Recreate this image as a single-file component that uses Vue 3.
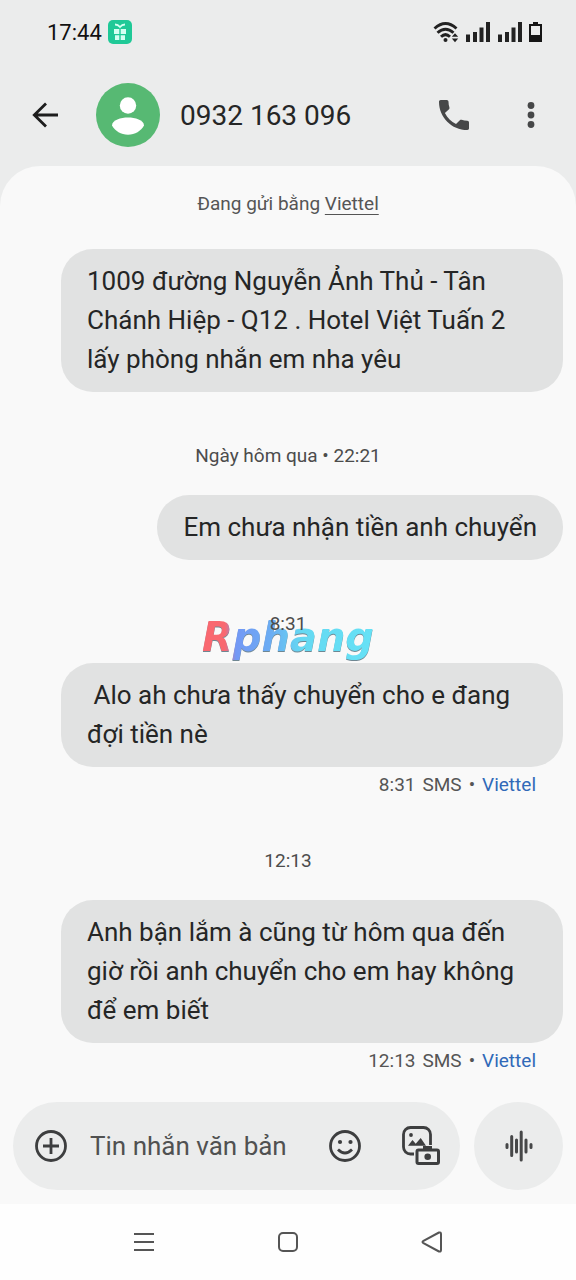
<script setup>
const thread = [
  {
    id: 1,
    text: '1009 đường Nguyễn Ảnh Thủ - Tân Chánh Hiệp - Q12 . Hotel Việt Tuấn 2 lấy phòng nhắn em nha yêu',
  },
  { id: 2, stamp: 'Ngày hôm qua • 22:21', text: 'Em chưa nhận tiền anh chuyển' },
  {
    id: 3,
    stamp: '8:31',
    logo: 'Rphang',
    text: ' Alo ah chưa thấy chuyển cho e đang đợi tiền nè',
    sent: '8:31',
  },
  {
    id: 4,
    stamp: '12:13',
    text: 'Anh bận lắm à cũng từ hôm qua đến giờ rồi anh chuyển cho em hay không để em biết',
    sent: '12:13',
  },
]
</script>

<template>
  <div class="phone">
    <div class="status">
      <div class="status-left">
        <span class="clock">17:44</span>
        <svg class="gift" viewBox="0 0 24 24" aria-hidden="true">
          <rect width="24" height="24" rx="5" fill="#1fc997" />
          <path d="M7 4.5q3 0 5 2.500q2-2.500 5-2.500" fill="none" stroke="#d5fff2" stroke-width="1.800" />
          <path d="M6 9h5.300v5H6zM12.700 9H18v5h-5.300zM7 15.200h4.300V20H7zM12.700 15.200H17V20h-4.300z" fill="#d5fff2" />
        </svg>
      </div>
      <div class="status-right" aria-hidden="true">
        <svg class="wifi" viewBox="0 0 26 22">
          <g fill="none" stroke="#222" stroke-width="2.900">
            <path d="M1.500 7.500Q12.500 -2.500 23.500 7.500" />
            <path d="M4.500 11.800Q12.500 4.500 20.500 11.800" />
            <path d="M8 15.800Q12.500 11.500 17 15.800" />
          </g>
          <circle cx="12.500" cy="19" r="2" fill="#222" />
          <path d="M18.800 15.800l3.200-3.600 3.200 3.600zM18.800 17.600h6.400L22 21.200z" fill="#222" />
        </svg>
        <svg v-for="n in 2" :key="n" class="bars" viewBox="0 0 26 20">
          <path d="M1 12.500h4V20H1zM8 10h4v10H8zM14.500 5.500h4V20h-4zM21 0h4v20h-4z" fill="#222" />
        </svg>
        <svg class="battery" viewBox="0 0 13 20">
          <path d="M4 0h5v2h4v18H0V2h4zM2 4v9h9V4z" fill="#151515" fill-rule="evenodd" />
        </svg>
      </div>
    </div>

    <header class="bar">
      <button class="icon-btn back" type="button" aria-label="Quay lại">
        <svg viewBox="0 0 28 28" fill="none" stroke="#1d1d1d" stroke-width="2.800">
          <path d="M27 14H3M15 2.500L3.300 14 15 25.500" />
        </svg>
      </button>
      <svg class="avatar" viewBox="0 0 64 64" aria-hidden="true">
        <circle cx="32" cy="32" r="32" fill="#57b973" />
        <circle cx="32" cy="22.500" r="8.200" fill="#fff" />
        <path d="M16 42.500C16 37 25 34.500 32 34.500S48 37 48 42.500C45 48 39 51.700 32 51.700S19 48 16 42.500z" fill="#fff" />
      </svg>
      <h1 class="name">0932 163 096</h1>
      <button class="icon-btn call" type="button" aria-label="Gọi">
        <svg viewBox="3 3 18 18" fill="#464748">
          <path d="M6.540 10.790c1.500 2.900 3.770 5.270 6.670 6.670l2.300-2.300c.28-.28.670-.36 1.020-.24 1.120.37 2.320.57 3.470.57.600 0 1 .45 1 1V20c0 .550-.4 1-1 1C10.600 21 3 13.400 3 4c0-.550.450-1 1-1h3.700c.550 0 1 .450 1 1 0 1.250.2 2.450.57 3.570.1.350 0 .740-.25 1.020z" />
        </svg>
      </button>
      <button class="icon-btn more" type="button" aria-label="Tùy chọn khác">
        <svg viewBox="0 0 8 28" fill="#464748">
          <circle cx="4" cy="4.500" r="3.400" /><circle cx="4" cy="14" r="3.400" /><circle cx="4" cy="23.500" r="3.400" />
        </svg>
      </button>
    </header>

    <main class="panel">
      <p class="notice">Đang gửi bằng <a href="#sim">Viettel</a></p>

      <section v-for="m in thread" :key="m.id" class="entry">
        <div v-if="m.stamp" class="stamp">
          <span v-if="m.logo" class="logo">{{ m.logo }}</span>
          <time class="stamp-text">{{ m.stamp }}</time>
        </div>
        <p class="bubble">{{ m.text }}</p>
        <div v-if="m.sent" class="meta">
          <span>{{ m.sent }}</span><span>SMS</span><span>•</span><a href="#sim">Viettel</a>
        </div>
      </section>

      <form class="composer" @submit.prevent>
        <div class="field">
          <button class="icon-btn" type="button" aria-label="Đính kèm">
            <svg class="i34" viewBox="0 0 34 34" fill="none" stroke="#3d3e3f" stroke-width="2.800">
              <circle cx="17" cy="17" r="14.500" /><path d="M17 9v16M9 17h16" />
            </svg>
          </button>
          <input class="input" type="text" placeholder="Tin nhắn văn bản" aria-label="Tin nhắn văn bản" />
          <button class="icon-btn" type="button" aria-label="Biểu tượng cảm xúc">
            <svg class="i34" viewBox="0 0 34 34" fill="none" stroke="#3d3e3f" stroke-width="2.800">
              <circle cx="17" cy="17" r="14.500" />
              <path d="M10 20.500q7 7 14 0" />
              <circle cx="12" cy="13" r="2.100" fill="#3d3e3f" stroke="none" />
              <circle cx="22.500" cy="13" r="2.100" fill="#3d3e3f" stroke="none" />
            </svg>
          </button>
          <button class="icon-btn gallery" type="button" aria-label="Thư viện ảnh">
            <svg viewBox="0 0 38 40">
              <path d="M28.500 19V8.500a7 7 0 0 0-7-7h-13a7 7 0 0 0-7 7v12.500a7 7 0 0 0 7 7H12" fill="none" stroke="#3d3e3f" stroke-width="2.800" />
              <circle cx="9" cy="9" r="1.900" fill="#3d3e3f" />
              <path d="M6 19.800l4.500-5.800 3.200 3.700 5-5.700 5.300 7.800z" fill="#3d3e3f" />
              <path d="M21 21.500h9" stroke="#3d3e3f" stroke-width="3" />
              <rect x="15" y="24" width="21.500" height="13.500" rx="1.500" fill="#ebecec" stroke="#3d3e3f" stroke-width="3" />
              <circle cx="25.700" cy="30.800" r="3.300" fill="#3d3e3f" />
            </svg>
          </button>
        </div>
        <button class="voice" type="button" aria-label="Ghi âm">
          <svg viewBox="0 0 28 32" fill="none" stroke="#464748" stroke-width="3" stroke-linecap="round">
            <path d="M2 14.500v3M6.700 6.500v19M11.500 10v12M16.200 2v28M21 10v12M26 14.500v3" />
          </svg>
        </button>
      </form>
    </main>

    <nav class="nav">
      <button class="icon-btn" type="button" aria-label="Ứng dụng gần đây">
        <svg viewBox="0 0 22 22" fill="none" stroke="#555" stroke-width="2"><path d="M1 3h20M1 11h20M1 19h20" /></svg>
      </button>
      <button class="icon-btn" type="button" aria-label="Màn hình chính">
        <svg viewBox="0 0 22 22" fill="none" stroke="#555" stroke-width="2"><rect x="2" y="2" width="18" height="18" rx="4" /></svg>
      </button>
      <button class="icon-btn" type="button" aria-label="Trở về">
        <svg viewBox="0 0 22 22" fill="none" stroke="#555" stroke-width="2" stroke-linejoin="round"><path d="M2 10.200L18 1.500Q20 1 20 3v16q0 2-2 1.500L2 11.800Q1 11 2 10.200z" /></svg>
      </button>
    </nav>
  </div>
</template>

<style>
body {
  margin: 0;
  background: #ebecec;
}
</style>

<style scoped>
.phone {
  display: flex;
  flex-direction: column;
  min-height: 100vh;
  font-family: Roboto, "Noto Sans", sans-serif;
  color: #252626;
  background: #ebecec;
}
.status {
  display: flex;
  justify-content: space-between;
  align-items: center;
  height: 64px;
  padding: 0 34px 0 47px;
}
.status-left,
.status-right {
  display: flex;
  align-items: center;
  gap: 6px;
}
.clock {
  font-size: 22px;
  font-weight: 400;
  color: #111;
}
.gift {
  width: 24px;
  height: 24px;
}
.wifi {
  width: 26px;
  height: 22px;
}
.bars {
  width: 26px;
  height: 20px;
}
.battery {
  width: 13px;
  height: 20px;
}
.icon-btn {
  display: flex;
  align-items: center;
  justify-content: center;
  flex: none;
  padding: 0;
  border: 0;
  background: none;
}
.bar {
  display: flex;
  align-items: center;
  height: 102px;
  padding: 0 41px 0 31px;
}
.back svg {
  width: 28px;
  height: 28px;
}
.avatar {
  flex: none;
  width: 64px;
  height: 64px;
  margin-left: 37px;
}
.name {
  flex: 1;
  margin: 0 0 0 20px;
  font-size: 28px;
  font-weight: 400;
}
.call svg {
  width: 30px;
  height: 30px;
}
.more {
  margin-left: 58px;
}
.more svg {
  width: 8px;
  height: 28px;
}
.panel {
  display: flex;
  flex: 1;
  flex-direction: column;
  padding: 26px 13px 14px;
  border-radius: 40px 40px 0 0;
  background: #f9f9f9;
}
.notice {
  margin: 0 0 33px;
  font-size: 19px;
  line-height: 24px;
  text-align: center;
  color: #555;
}
.notice a {
  color: inherit;
  text-underline-offset: 4px;
}
.entry {
  display: flex;
  flex-direction: column;
}
.stamp {
  position: relative;
  margin: 52px 0 27px;
  font-size: 19px;
  line-height: 24px;
  text-align: center;
  color: #4c4c4c;
}
.stamp-text {
  position: relative;
}
.logo {
  position: absolute;
  left: 50%;
  top: 50%;
  transform: translate(-50%, -50%);
  margin-top: 13px;
  padding: 0 4px;
  font-family: "DejaVu Sans", sans-serif;
  font-size: 40px;
  font-weight: 700;
  font-style: italic;
  line-height: 48px;
  background: linear-gradient(90deg, #f96870 15%, #7398f5 21%, #6bacf3 40%, #65d9f2 58%, #66e2f6);
  background-clip: text;
  color: transparent;
  filter: drop-shadow(0 1px 0 #6f8792);
}
.bubble {
  align-self: flex-end;
  box-sizing: border-box;
  margin: 0 0 0 48px;
  padding: 13px 26px;
  border-radius: 32px;
  background: #e1e2e2;
  font-size: 26px;
  line-height: 39px;
  white-space: pre-wrap;
}
.meta {
  display: flex;
  justify-content: flex-end;
  gap: 7px;
  margin-top: 6px;
  padding-right: 27px;
  font-size: 19px;
  line-height: 24px;
  color: #555;
}
.meta a {
  color: #3069b8;
  text-decoration: none;
}
.composer {
  display: flex;
  gap: 14px;
  margin: auto 0 0;
}
.field {
  display: flex;
  flex: 1;
  align-items: center;
  min-width: 0;
  height: 88px;
  padding: 0 20px 0 21px;
  box-sizing: border-box;
  border-radius: 44px;
  background: #ebecec;
}
.i34 {
  width: 34px;
  height: 34px;
}
.input {
  flex: 1;
  min-width: 0;
  margin: 0 16px 0 22px;
  padding: 0;
  border: 0;
  outline: 0;
  background: none;
  font: inherit;
  font-size: 26px;
}
.input::placeholder {
  color: #505151;
  opacity: 1;
}
.gallery {
  margin-left: 40px;
}
.gallery svg {
  width: 38px;
  height: 40px;
}
.voice {
  display: flex;
  flex: none;
  align-items: center;
  justify-content: center;
  width: 89px;
  height: 88px;
  padding: 0;
  border: 0;
  border-radius: 50%;
  background: #ebecec;
}
.voice svg {
  width: 28px;
  height: 32px;
}
.nav {
  display: flex;
  justify-content: space-between;
  align-items: center;
  height: 76px;
  padding: 0 133px;
  background: #fefefe;
}
.nav svg {
  width: 22px;
  height: 22px;
}
</style>
